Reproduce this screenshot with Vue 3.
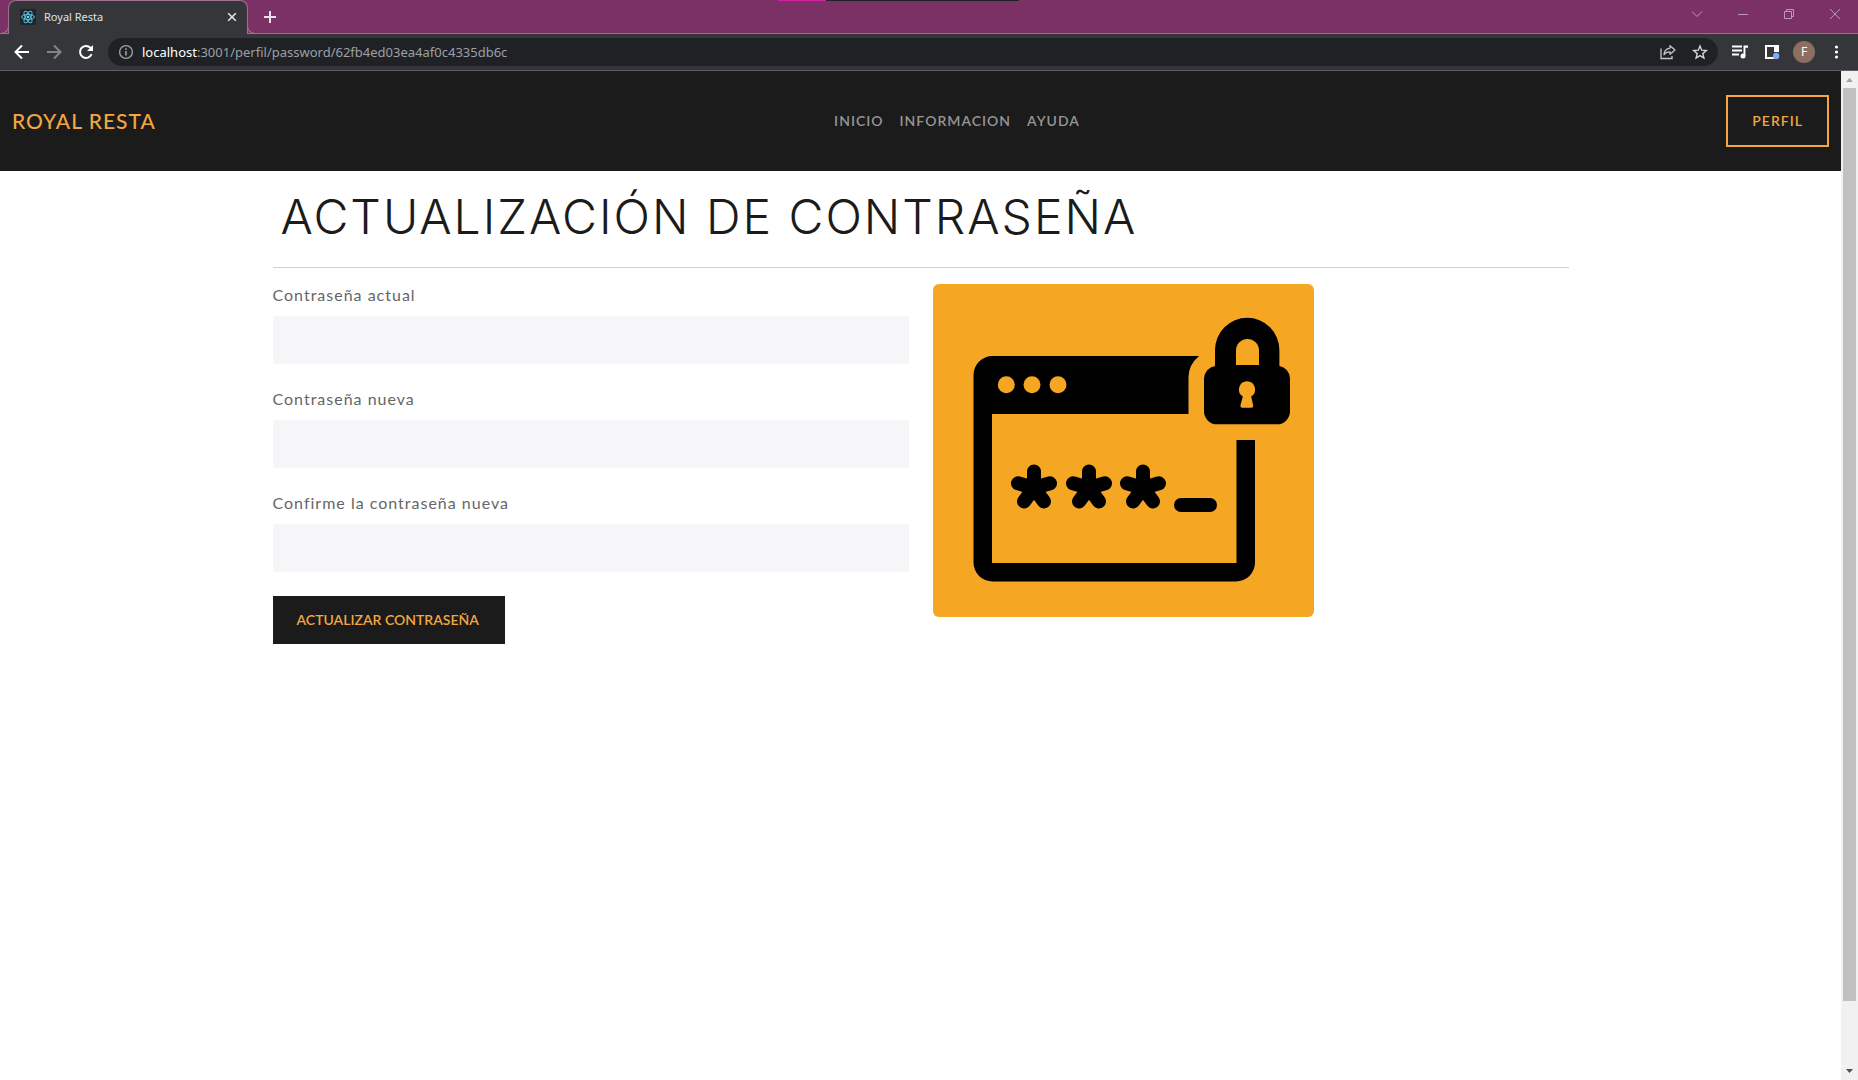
<script setup>
import { ref } from 'vue'

const links = ['Inicio', 'Informacion', 'Ayuda']

const fields = ref([
  { id: 'current', label: 'Contraseña actual', value: '' },
  { id: 'next', label: 'Contraseña nueva', value: '' },
  { id: 'confirm', label: 'Confirme la contraseña nueva', value: '' },
])

const asterisks = [101, 156, 210]
</script>

<template>
  <div class="browser">
    <div class="tabstrip">
      <span class="edge edge-accent"></span>
      <span class="edge edge-dark"></span>
      <div class="tab">
        <svg class="favicon" viewBox="0 0 16 16" width="16" height="16" aria-hidden="true">
          <rect width="16" height="16" rx="2" fill="#20232a" />
          <g fill="none" stroke="#53c1de">
            <ellipse cx="8" cy="8" rx="6.5" ry="2.5" />
            <ellipse cx="8" cy="8" rx="6.5" ry="2.5" transform="rotate(60 8 8)" />
            <ellipse cx="8" cy="8" rx="6.5" ry="2.5" transform="rotate(120 8 8)" />
          </g>
          <circle cx="8" cy="8" r="1.3" fill="#61dafb" />
        </svg>
        <span class="tab-title">Royal Resta</span>
        <button class="icon" type="button" aria-label="Cerrar pestaña">
          <svg viewBox="0 0 16 16" width="16" height="16"><path d="M4.2 4.2l7.6 7.6M11.8 4.2l-7.6 7.6" stroke="#dfe1e5" stroke-width="1.6" /></svg>
        </button>
      </div>
      <button class="icon new-tab" type="button" aria-label="Nueva pestaña">
        <svg viewBox="0 0 16 16" width="16" height="16"><path d="M8 2v12M2 8h12" stroke="#ecdfe7" stroke-width="2" /></svg>
      </button>
      <div class="window-controls">
        <button class="control" type="button" aria-label="Buscar pestañas">
          <svg viewBox="0 0 12 12" width="12" height="12"><path d="M1 3.5l5 5 5-5" /></svg>
        </button>
        <button class="control" type="button" aria-label="Minimizar">
          <svg viewBox="0 0 12 12" width="12" height="12"><path d="M1 6.5h10" /></svg>
        </button>
        <button class="control" type="button" aria-label="Restaurar">
          <svg viewBox="0 0 12 12" width="12" height="12"><path d="M1.5 3.5h7v7h-7zM3.5 3.5v-2h7v7h-2" /></svg>
        </button>
        <button class="control" type="button" aria-label="Cerrar">
          <svg viewBox="0 0 12 12" width="12" height="12"><path d="M1 1l10 10M11 1L1 11" /></svg>
        </button>
      </div>
    </div>

    <div class="toolbar">
      <button class="icon" type="button" aria-label="Atrás">
        <svg viewBox="0 0 16 16" width="16" height="16"><path d="M15 8H2M8 1.5L1.5 8 8 14.5" fill="none" stroke="#fff" stroke-width="2" /></svg>
      </button>
      <button class="icon" type="button" aria-label="Adelante">
        <svg viewBox="0 0 16 16" width="16" height="16"><path d="M1 8h13M8 1.5L14.5 8 8 14.5" fill="none" stroke="#828488" stroke-width="2" /></svg>
      </button>
      <button class="icon" type="button" aria-label="Recargar">
        <svg viewBox="0 0 16 16" width="16" height="16">
          <path d="M13.6 10.2A6 6 0 1 1 12.4 3.8L14 5.5" fill="none" stroke="#fff" stroke-width="2" />
          <path d="M15 1v6H9z" fill="#fff" />
        </svg>
      </button>
      <div class="address">
        <svg viewBox="0 0 16 16" width="16" height="16" aria-hidden="true">
          <circle cx="8" cy="8" r="6.4" fill="none" stroke="#9aa0a6" stroke-width="1.4" />
          <path d="M8 7v4.5M8 4.3v1.6" stroke="#9aa0a6" stroke-width="1.6" />
        </svg>
        <span class="url"><span class="host">localhost</span>:3001/perfil/password/62fb4ed03ea4af0c4335db6c</span>
        <button class="icon" type="button" aria-label="Compartir">
          <svg viewBox="0 0 16 16" width="16" height="16">
            <path d="M1 4.500v10h11v-2.500" fill="none" stroke="#c4c7c9" stroke-width="1.300" />
            <path d="M10 1.700L15 6l-5 4.200V7.800C7 7.800 5.200 8.600 4 10.800 4.200 7 6.200 4.600 10 4.100z" fill="none" stroke="#c4c7c9" stroke-width="1.300" stroke-linejoin="round" />
          </svg>
        </button>
        <button class="icon" type="button" aria-label="Añadir a marcadores">
          <svg viewBox="0 0 16 16" width="16" height="16">
            <path d="M8 2l1.700 4.200 4.600.4-3.500 3 1.100 4.400L8 11.600 4.100 14l1.100-4.400-3.500-3 4.600-.4z" fill="none" stroke="#d3d5d7" stroke-width="1.400" />
          </svg>
        </button>
      </div>
      <button class="icon" type="button" aria-label="Control multimedia">
        <svg viewBox="0 0 16 16" width="16" height="16">
          <path d="M0 2.500h10M0 6.500h10M0 10.500h7" stroke="#fff" stroke-width="2" />
          <path d="M11.500 1.500H16v2.200h-2.600V12h-1.900z" fill="#fff" />
          <circle cx="11" cy="12" r="2.500" fill="#fff" />
        </svg>
      </button>
      <button class="icon" type="button" aria-label="Panel lateral">
        <svg viewBox="0 0 16 16" width="16" height="16">
          <path d="M1 1h14v14H1z M3 3v10h7V3z" fill="#fff" fill-rule="evenodd" />
          <path d="M10 8h6v8h-6z" fill="#35363a" />
          <circle cx="12.200" cy="12" r="3.200" fill="#7cacf8" />
        </svg>
      </button>
      <button class="avatar" type="button" aria-label="Perfil F">F</button>
      <button class="icon" type="button" aria-label="Menú">
        <svg viewBox="0 0 16 16" width="16" height="16" fill="#fff"><circle cx="8.500" cy="3" r="1.600" /><circle cx="8.500" cy="8" r="1.600" /><circle cx="8.500" cy="13" r="1.600" /></svg>
      </button>
    </div>

    <div class="viewport">
      <div class="page">
        <header class="navbar">
          <a class="brand" href="#">Royal Resta</a>
          <nav class="links">
            <a v-for="link in links" :key="link" href="#">{{ link }}</a>
          </nav>
          <button class="profile" type="button">Perfil</button>
        </header>

        <main class="container">
          <h1>Actualización de contraseña</h1>
          <hr />
          <div class="columns">
            <form @submit.prevent>
              <div v-for="field in fields" :key="field.id" class="field">
                <label :for="field.id">{{ field.label }}</label>
                <input :id="field.id" v-model="field.value" type="password" />
              </div>
              <button class="submit" type="submit">Actualizar contraseña</button>
            </form>
            <div class="picture">
              <svg viewBox="0 0 381 333" width="381" height="333" role="img" aria-label="Ventana con contraseña y candado">
                <rect width="381" height="333" fill="#f5a623" />
                <path d="M59.500 72H266Q255.500 81 255.500 93V130H59V279H303.500V156H322V278.500A19 19 0 0 1 303 297.500H59.500A19 19 0 0 1 40.500 278.500V91A19 19 0 0 1 59.500 72Z" />
                <g fill="#f5a623">
                  <circle cx="73.300" cy="100.700" r="8.500" />
                  <circle cx="99" cy="100.700" r="8.500" />
                  <circle cx="125" cy="100.700" r="8.500" />
                </g>
                <path fill-rule="evenodd" d="M282 82V66a32.200 32.200 0 0 1 64.400 0V82A13 13 0 0 1 357 94.500V127A13 13 0 0 1 344 140.300H284A13 13 0 0 1 271 127V94.500A13 13 0 0 1 282 82ZM303 81H326V66.500a11.500 11.500 0 0 0-23 0Z" />
                <path fill="#f5a623" d="M314 97.200a8.300 8.300 0 0 1 4.200 15.300l2 9q.3 2.200-2 2.200h-8.800q-2.300 0-2-2.200l2.400-9A8.300 8.300 0 0 1 314 97.200Z" />
                <g fill="none" stroke="#000" stroke-width="14" stroke-linecap="round">
                  <path v-for="x in asterisks" :key="x" :d="`M${x} 204v-16.500M${x} 204l-16-4.700M${x} 204l16-4.700M${x} 204l-10 13.500M${x} 204l10 13.500`" />
                  <path d="M248 221h29" />
                </g>
              </svg>
            </div>
          </div>
        </main>
      </div>

      <div class="scrollbar" aria-hidden="true">
        <svg viewBox="0 0 17 17" width="17" height="17"><path d="M5 11l3.500-4 3.500 4z" fill="#a3a3a3" /></svg>
        <span class="thumb"></span>
        <span class="rest"></span>
        <svg viewBox="0 0 17 17" width="17" height="17"><path d="M5 6l3.500 4L12 6z" fill="#505050" /></svg>
      </div>
    </div>
  </div>
</template>

<style>
body {
  margin: 0;
  background: #fff;
}
</style>

<style scoped>
* {
  box-sizing: border-box;
}

button {
  margin: 0;
  padding: 0;
  border: 0;
  background: none;
  font: inherit;
  color: inherit;
}

svg {
  display: block;
  flex: none;
}

.browser {
  display: flex;
  flex-direction: column;
  min-height: 100vh;
  font-family: "Noto Sans", "Open Sans", sans-serif;
}

/* Browser chrome */
.tabstrip {
  position: relative;
  display: flex;
  align-items: center;
  height: 34px;
  padding-left: 8px;
  background: #7b3166;
  border-bottom: 1px solid #a1708f;
}

.edge {
  position: absolute;
  top: 0;
  height: 1px;
}

.edge-accent {
  left: 778px;
  width: 48px;
  background: #d0219f;
}

.edge-dark {
  left: 826px;
  width: 193px;
  background: #222;
}

.tab {
  position: relative;
  display: flex;
  align-items: center;
  gap: 8px;
  width: 240px;
  height: 34px;
  margin-bottom: -1px;
  padding: 0 7px 1px 11px;
  background: #35363a;
  border: 1px solid #a1708f;
  border-bottom: 0;
  border-radius: 8px 8px 0 0;
}

.tab::before,
.tab::after {
  content: "";
  position: absolute;
  bottom: 0;
  width: 8px;
  height: 8px;
  border-bottom: 1px solid #a1708f;
}

.tab::before {
  right: 100%;
  border-right: 1px solid #a1708f;
  border-bottom-right-radius: 8px;
}

.tab::after {
  left: 100%;
  border-left: 1px solid #a1708f;
  border-bottom-left-radius: 8px;
}

.tab-title {
  flex: 1;
  font-size: 11px;
  line-height: 16px;
  color: #dfe1e5;
}

.new-tab {
  margin-left: 14px;
}

.window-controls {
  display: flex;
  margin-left: auto;
  margin-bottom: 5px;
}

.control {
  display: flex;
  align-items: center;
  justify-content: center;
  width: 46px;
  height: 28px;
}

.control path {
  fill: none;
  stroke: #bd98b2;
}

.toolbar {
  display: flex;
  align-items: center;
  gap: 16px;
  height: 37px;
  padding: 0 14px;
  background: #35363a;
  border-bottom: 1px solid #5f6064;
}

.address {
  display: flex;
  align-items: center;
  flex: 1;
  gap: 16px;
  height: 28px;
  margin: 0 -2px;
  padding: 0 10px;
  border-radius: 14px;
  background: #202124;
}

.url {
  flex: 1;
  margin-left: -8px;
  font-size: 13px;
  line-height: 20px;
  color: #9aa0a6;
}

.host {
  color: #fff;
}

.avatar {
  width: 22px;
  height: 22px;
  margin: 0 -3px;
  border-radius: 50%;
  background: #8d6e63;
  color: #fff;
  font-size: 12px;
  line-height: 22px;
  text-align: center;
}

/* Site */
.viewport {
  display: flex;
  flex: 1;
}

.page {
  flex: 1;
  font-family: Lato, "Open Sans", sans-serif;
}

.navbar {
  display: flex;
  align-items: center;
  justify-content: space-between;
  height: 100px;
  padding: 0 12px;
  background: #1b1b1b;
  text-transform: uppercase;
}

.brand {
  padding-bottom: 2px;
  color: #f1a641;
  font-size: 21px;
  font-weight: 500;
  letter-spacing: 1px;
  text-decoration: none;
}

.links {
  display: flex;
  gap: 16px;
  padding: 0 0 2px 32px;
}

.links a {
  color: #969696;
  font-size: 14px;
  font-weight: 600;
  letter-spacing: 1px;
  text-decoration: none;
}

.profile {
  height: 52px;
  padding: 0 24px 2px;
  border: 2px solid #f1a641;
  color: #f1a641;
  font-size: 14px;
  font-weight: 600;
  letter-spacing: 1px;
  text-transform: uppercase;
}

.container {
  max-width: 1320px;
  margin: 0 auto;
  padding: 0 12px;
}

h1 {
  margin: 0;
  padding: 16px 8px 20px;
  color: #1b1b1b;
  font-family: Inter, sans-serif;
  font-size: 48px;
  font-weight: 300;
  line-height: 60px;
  letter-spacing: 2px;
  text-transform: uppercase;
}

hr {
  height: 1px;
  margin: 0 0 16px;
  border: 0;
  background: #d1d1d1;
}

.columns {
  display: grid;
  grid-template-columns: 1fr 1fr;
  gap: 24px;
}

.field {
  display: flex;
  flex-direction: column;
  gap: 10px;
  margin-bottom: 24px;
}

label {
  color: #666;
  font-size: 16px;
  line-height: 22px;
  letter-spacing: 1px;
}

input {
  width: 100%;
  height: 48px;
  padding: 0 16px;
  border: 0;
  background: #f6f6f9;
  font: inherit;
}

.submit {
  height: 48px;
  padding: 0 26px 2px 24px;
  background: #1b1b1b;
  color: #f1a641;
  font-size: 14px;
  font-weight: 600;
  text-transform: uppercase;
}

.picture svg {
  border-radius: 6px;
}

.scrollbar {
  display: flex;
  flex-direction: column;
  align-items: center;
  width: 17px;
  background: #f1f1f1;
}

.thumb {
  flex: 913;
  width: 13px;
  background: #c1c1c1;
}

.rest {
  flex: 62;
}
</style>
